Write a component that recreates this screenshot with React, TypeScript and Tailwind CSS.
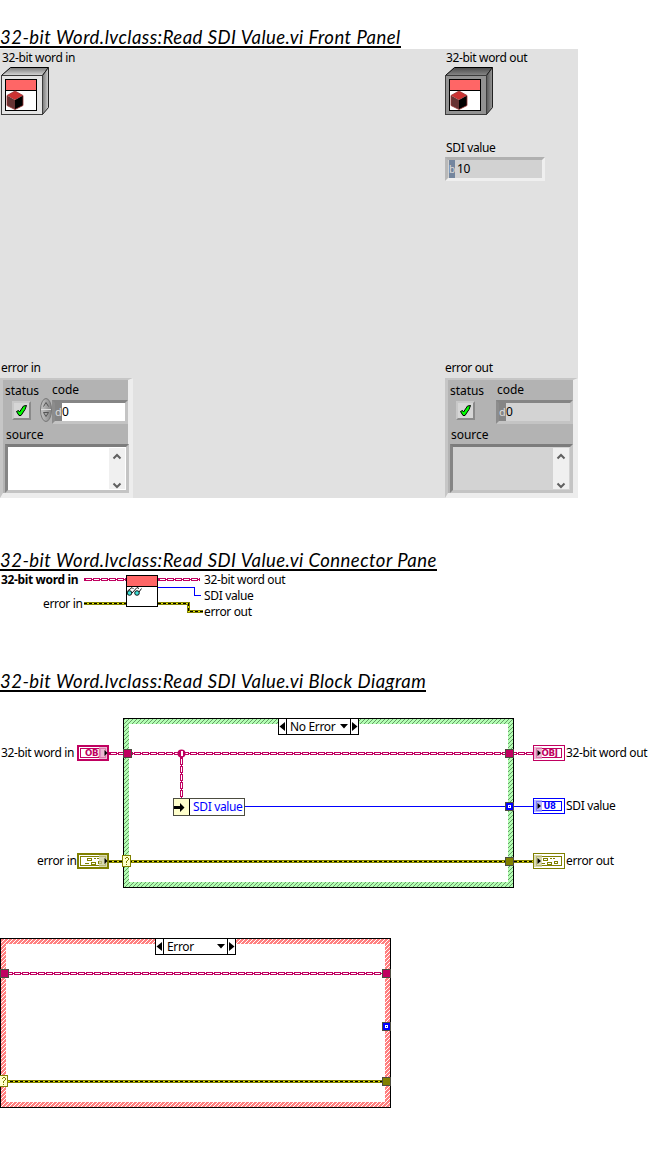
import type { ReactNode } from "react";

const PINK = "#c00060";
const OLIVE = "#808000";

function Heading({ children, className = "" }: { children: ReactNode; className?: string }) {
  return (
    <h2
      className={`h-[22px] w-max overflow-hidden whitespace-nowrap border-b-2 border-black font-['Lato',sans-serif] text-[18.5px] italic leading-[23px] tracking-[0.47px] ${className}`}
    >
      {children}
    </h2>
  );
}

function ObjectBox({ dark = false }: { dark?: boolean }) {
  const id = dark ? "box-out" : "box-in";
  return (
    <svg width="48" height="48" viewBox="0 0 48 48" className="block">
      <defs>
        <linearGradient id={id} x1="0" y1="0" x2="0" y2="1">
          <stop offset="0" stopColor={dark ? "#4a4a4a" : "#787878"} />
          <stop offset="1" stopColor={dark ? "#888888" : "#d8d8d8"} />
        </linearGradient>
        <linearGradient id={`${id}-side`} x1="0" y1="0" x2="1" y2="0">
          <stop offset="0" stopColor={dark ? "#555555" : "#777777"} />
          <stop offset="1" stopColor={dark ? "#999999" : "#d0d0d0"} />
        </linearGradient>
      </defs>
      <path d="M.5 8.5 9.5.5h38l-6 8z" fill={`url(#${id})`} stroke="#000" />
      <path d="M41.5 8.5l6-8v40l-6 7z" fill={`url(#${id}-side)`} stroke="#222" />
      <rect x=".5" y="8.5" width="41" height="39" fill={dark ? "#929292" : "#e4e4e4"} stroke="#3c3c3c" />
      <rect x="4.5" y="12.5" width="31" height="31" fill="#fff" stroke="#000" />
      <rect x="5" y="13" width="30" height="10" fill="#ff6666" />
      <path d="M5 23.5h30" stroke="#000" />
      <path d="M6 28.5l8-4.5 8 4.5-8 4.5z" fill="#cc3333" />
      <path d="M6 28.5l8 4.5v9.500l-8-4z" fill="#663333" />
      <path d="M22 28.5l-8 4.500v9.500l8-4z" fill="#000" />
      <path d="M6 28.5l8-4.500 8 4.500v10l-8 4-8-4z" fill="none" stroke="#993333" strokeWidth=".8" />
    </svg>
  );
}

function StatusButton() {
  return (
    <div className="h-[19px] w-[19px] border-2 border-b-[#8a8a8a] border-l-[#c8c8c8] border-r-[#8a8a8a] border-t-[#c8c8c8] bg-[#d6d6d6]">
      <svg width="15" height="15" viewBox="0 0 15 15" className="block">
        <path d="M2.500 8.500l2-1 1 1.500 4-6 3-.500-1.500 4-4 6H5z" fill="#00ff00" stroke="#000" />
      </svg>
    </div>
  );
}

function Spinner() {
  return (
    <svg width="12" height="24" viewBox="0 0 12 24" className="block">
      <defs>
        <linearGradient id="spin" x1="0" x2="1">
          <stop offset="0" stopColor="#c8c8c8" />
          <stop offset="1" stopColor="#858585" />
        </linearGradient>
      </defs>
      <ellipse cx="6" cy="12" rx="5.500" ry="11.500" fill="url(#spin)" stroke="#777" />
      <path d="M1 11.500h10" stroke="#ddd" />
      <path d="M3.500 8.500L6 4.500l2.500 4M3.500 14.500h5L6 18.500z" fill="none" stroke="#555" />
    </svg>
  );
}

function ErrorCluster({ output = false }: { output?: boolean }) {
  const fill = output ? "bg-[#d3d3d3]" : "bg-white";
  return (
    <div className="h-[120px] w-[133px] border-b-[5px] border-l-[3px] border-r-[5px] border-t-2 border-b-[#ededed] border-l-[#c6c6c6] border-r-[#ededed] border-t-[#c6c6c6] bg-[#b3b3b3] pl-0.5 tracking-[-0.05px]">
      <div className="flex h-[21px] items-start leading-[16px]">
        <span className={output ? "w-[47px] pt-[3px]" : "w-[47px] pt-[3px]"}>status</span>
        <span className="pt-0.5">code</span>
      </div>
      <div className="flex h-[25px] items-start">
        <div className={output ? "ml-1.5" : "ml-[7px]"}>
          <StatusButton />
        </div>
        <div className="ml-[9px] mt-[-3px] w-3">{!output && <Spinner />}</div>
        <div
          className={`mt-[-1px] flex h-[24px] border-[3px] border-b-[#c4c4c4] border-l-[#8c8c8c] border-r-[#c4c4c4] border-t-[#858585] leading-[17px] ${fill} ${output ? "w-[77px]" : "w-[76px]"}`}
        >
          <span className="w-[7px] overflow-hidden bg-[#858585] text-[11px] text-[#dddddd]">d</span>
          <span>0</span>
        </div>
      </div>
      <div className="h-[18px] pl-px leading-[18px]">source</div>
      <div
        className={`flex h-[49px] justify-end border-[3px] border-b-[#c4c4c4] border-l-[#858585] border-r-[#c4c4c4] border-t-[#7c7c7c] pr-px pt-px ${output ? "w-[123px]" : "w-[124px]"} ${fill}`}
      >
        <svg width="16" height="41" viewBox="0 0 16 41" className="block bg-[#f0f0f0]">
          <path d="M4.500 10.500L8 7l3.500 3.500M4.500 35.500L8 39l3.500-3.500" fill="none" stroke="#606060" strokeWidth="2" />
        </svg>
      </div>
    </div>
  );
}

function FrontPanel() {
  return (
    <div className="mt-px flex h-[449px] w-[578px] justify-between bg-[#e1e1e1]">
      <div className="flex flex-col justify-between">
        <div className="pl-px">
          <div className="h-[18px] pl-px leading-[18px]">32-bit word in</div>
          <ObjectBox />
        </div>
        <div>
          <div className="h-[18px] pl-px leading-[16px]">error in</div>
          <ErrorCluster />
        </div>
      </div>
      <div className="flex w-[133px] flex-col justify-between">
        <div>
          <div className="h-[18px] pl-px leading-[18px]">32-bit word out</div>
          <ObjectBox dark />
          <div className="mt-[23px] h-[19px] pl-px leading-[20px]">SDI value</div>
          <div className="flex h-[24px] w-[100px] border-[3px] border-b-[#efefef] border-l-[#b8b8b8] border-r-[#efefef] border-t-[#b0b0b0] bg-[#d2d2d2] leading-[18px]">
            <span className="ml-px w-1.5 overflow-hidden bg-[#74869e] text-[10px] text-[#dddddd]">b</span>
            <span className="pl-0.5">10</span>
          </div>
        </div>
        <div>
          <div className="h-[18px] leading-[16px]">error out</div>
          <ErrorCluster output />
        </div>
      </div>
    </div>
  );
}

type Run = { x: number; y: number; length: number };

function ClassWire({ x, y, length }: Run) {
  return (
    <g fill="none">
      <path d={`M${x} ${y + 1.5}h${length}`} stroke={PINK} strokeWidth="3" />
      <path d={`M${x + 2} ${y + 1.5}h${length - 3}`} stroke="#fff" strokeDasharray="5 3" />
      <path d={`M${x + 8} ${y + 0.5}h${length - 8}`} stroke="#fff" strokeDasharray="1 7" />
      <path d={`M${x + 8} ${y + 2.5}h${length - 8}`} stroke="#fff" strokeDasharray="1 7" />
    </g>
  );
}

function ErrorWire({ d }: { d: string }) {
  return (
    <g fill="none">
      <path d={d} stroke={OLIVE} strokeWidth="3" />
      <path d={d} stroke="#e6e600" />
      <path d={d} stroke="#000" strokeDasharray="3 2" />
    </g>
  );
}

function ConnectorPane() {
  return (
    <div className="relative h-[50px] w-full">
      <svg width="650" height="50" viewBox="0 571 650 50" shapeRendering="crispEdges" className="block">
        <ClassWire x={84} y={578} length={42} />
        <ClassWire x={158} y={578} length={42} />
        <path d="M158 587.500h36.500v8H201" fill="none" stroke="#0000ff" />
        <ErrorWire d="M84 603.500h42" />
        <ErrorWire d="M158 603.500h30.500v8H203" />
        <rect x="126.500" y="575.500" width="31" height="31" fill="#fff" stroke="#000" />
        <rect x="127" y="576" width="30" height="10" fill="#ff6666" />
        <path d="M127 586.500h30" stroke="#000" />
        <g shapeRendering="auto" fill="#40e0d8" stroke="#000" strokeWidth=".9">
          <circle cx="129.500" cy="593" r="2.300" />
          <circle cx="137" cy="593" r="2.300" />
          <path d="M127.500 591l4.500-3.500 1.500 1.500M132 593l5-5.500 2 1M139 592l2.500-3.500" fill="none" />
        </g>
      </svg>
      <span className="absolute left-px top-0 font-bold leading-[18px]">32-bit word in</span>
      <span className="absolute left-[43px] top-6 leading-[18px]">error in</span>
      <span className="absolute left-[204px] top-0 leading-[18px]">32-bit word out</span>
      <span className="absolute left-[204px] top-4 leading-[18px]">SDI value</span>
      <span className="absolute left-[204px] top-8 leading-[18px]">error out</span>
    </div>
  );
}

function CaseFrame({ x, y, pattern }: { x: number; y: number; pattern: string }) {
  return (
    <g>
      <rect x={x + 0.5} y={y + 0.5} width="390" height="169" fill={`url(#${pattern})`} stroke="#000" />
      <rect x={x + 6} y={y + 6} width="379" height="158" fill="#fff" />
      <g transform={`translate(${x + 155} ${y})`}>
        <rect x=".5" y=".5" width="80" height="16" fill="#fff" stroke="#000" />
        <path d="M8.500 0v17M72.500 0v17" stroke="#000" />
        <g shapeRendering="auto">
          <path d="M1.500 8.500l5.500-4.500v9zM79.500 8.500L74 4v9zM62 6h8l-4 4.500z" fill="#000" />
        </g>
      </g>
    </g>
  );
}

function Tunnel({ x, y, color, hollow = false }: { x: number; y: number; color: string; hollow?: boolean }) {
  return (
    <g>
      <rect x={x + 0.5} y={y + 0.5} width="8" height="8" fill={color} stroke="#4c4c40" />
      {hollow && <rect x={x + 3.5} y={y + 3.5} width="2" height="2" fill={color} stroke="#fff" />}
    </g>
  );
}

function SelectorTerminal({ x, y }: { x: number; y: number }) {
  return (
    <g>
      <rect x={x - 0.5} y={y + 0.5} width="8" height="11" fill="#ffffcc" stroke={OLIVE} />
      <path
        d="M2 3h1v1H2zM3 2h2v1H3zM5 3h1v2H5zM4 5h1v1H4zM3 6h1v2H3zM3 9h1v1H3z"
        transform={`translate(${x} ${y})`}
        fill={OLIVE}
      />
    </g>
  );
}

type TerminalProps = { x: number; y: number; color: string; tint: string; label?: string; control?: boolean };

function Terminal({ x, y, color, tint, label, control = false }: TerminalProps) {
  const short = label?.length === 2;
  return (
    <g transform={`translate(${x} ${y})`}>
      <rect x=".5" y=".5" width="31" height="15" fill="#fff" stroke={color} />
      {control && <rect x="1.500" y="1.500" width="29" height="13" fill="#fff" stroke={color} />}
      <rect x="3.500" y="3.500" width="25" height="9" fill="#fff" stroke={color} />
      {label ? (
        <text
          x={control ? 8 : short ? 10.5 : 8.5}
          y="11"
          fill={color}
          fontFamily="DejaVu Sans, sans-serif"
          fontWeight="bold"
          fontSize="8"
          textLength={short ? 12 : 16}
          lengthAdjust="spacingAndGlyphs"
        >
          {label}
        </text>
      ) : (
        <path d="M10 5.500h4v2h-4zM8 10.500h4M17 5h2M14 9h4v2h-4zM20 5.500h2M21 8.500h3v2h-3z" fill="none" stroke={color} />
      )}
      <rect x={control ? 22 : 1} y="2" width="8" height="12" fill={tint} opacity=".75" />
      <path d={control ? "M27.500 5v6l3-3z" : "M4.500 5v6l3.500-3z"} fill="#000" shapeRendering="auto" />
    </g>
  );
}

function BlockDiagram() {
  return (
    <div className="relative h-[424px] w-full">
      <svg width="650" height="424" viewBox="0 692 650 424" shapeRendering="crispEdges" className="block">
        <defs>
          <pattern id="ok-hatch" width="4" height="4" patternUnits="userSpaceOnUse">
            <rect width="4" height="4" fill="#b3ffb3" />
            <path d="M3 0h1v1H3zM2 1h1v1H2zM1 2h1v1H1zM0 3h1v1H0z" fill="#669966" />
          </pattern>
          <pattern id="error-hatch" width="4" height="4" patternUnits="userSpaceOnUse">
            <rect width="4" height="4" fill="#ff8080" />
            <path d="M3 0h1v1H3zM2 1h1v1H2zM1 2h1v1H1zM0 3h1v1H0z" fill="#ffffff" />
          </pattern>
        </defs>

        <CaseFrame x={123} y={718} pattern="ok-hatch" />
        <ClassWire x={109} y={752} length={424} />
        <g transform="translate(183 757) rotate(90)">
          <ClassWire x={0} y={0} length={41} />
        </g>
        <g shapeRendering="auto">
          <circle cx="181.500" cy="753.500" r="4" fill={PINK} />
          <rect x="181" y="751" width="2" height="5" fill="#fff" />
        </g>
        <path d="M245 806.500h288" stroke="#0000ff" />
        <ErrorWire d="M109 861.500h424" />
        <Tunnel x={123} y={749} color={PINK} />
        <Tunnel x={505} y={749} color={PINK} />
        <Tunnel x={505} y={802} color="#0000ff" hollow />
        <Tunnel x={505} y={857} color={OLIVE} />
        <SelectorTerminal x={123} y={855} />

        <rect x="173.500" y="798.500" width="71" height="17" fill="#fff" stroke="#4c4c40" />
        <rect x="174" y="799" width="15" height="16" fill="#ffffcc" />
        <path d="M189.500 799v16" stroke="#000" />
        <path d="M174 806h6v-3l4.500 4.500-4.500 4.500v-3h-6z" fill="#000" shapeRendering="auto" />

        <Terminal x={77} y={745} color={PINK} tint="#e6a0c4" label="OBJ" control />
        <Terminal x={77} y={853} color={OLIVE} tint="#cccc99" control />
        <Terminal x={533} y={745} color={PINK} tint="#e6a0c4" label="OBJ" />
        <Terminal x={533} y={798} color="#0000ff" tint="#a0a0ff" label="U8" />
        <Terminal x={533} y={853} color={OLIVE} tint="#cccc99" />

        <CaseFrame x={0} y={938} pattern="error-hatch" />
        <ClassWire x={5} y={972} length={380} />
        <ErrorWire d="M5 1081.500h380" />
        <Tunnel x={0} y={969} color={PINK} />
        <Tunnel x={382} y={969} color={PINK} />
        <Tunnel x={382} y={1022} color="#0000ff" hollow />
        <Tunnel x={382} y={1077} color={OLIVE} />
        <SelectorTerminal x={0} y={1075} />
      </svg>
      <span className="absolute left-px top-[52px] leading-[18px]">32-bit word in</span>
      <span className="absolute left-[37px] top-[160px] leading-[18px]">error in</span>
      <span className="absolute left-[290px] top-[26px] leading-[18px]">No Error</span>
      <span className="absolute left-[193px] top-[106px] leading-[18px] text-[#0000ff]">SDI value</span>
      <span className="absolute left-[566px] top-[52px] leading-[18px]">32-bit word out</span>
      <span className="absolute left-[566px] top-[105px] leading-[18px]">SDI value</span>
      <span className="absolute left-[566px] top-[160px] leading-[18px]">error out</span>
      <span className="absolute left-[167px] top-[246px] leading-[18px]">Error</span>
    </div>
  );
}

export default function App() {
  return (
    <main className="h-[1158px] w-[650px] overflow-hidden whitespace-nowrap bg-white pt-[26px] font-['Noto_Sans',sans-serif] text-[12px] tracking-[-0.35px] text-black">
      <Heading>32-bit Word.lvclass:Read SDI Value.vi Front Panel</Heading>
      <FrontPanel />
      <Heading className="mt-[51px]">32-bit Word.lvclass:Read SDI Value.vi Connector Pane</Heading>
      <ConnectorPane />
      <Heading className="mt-[49px]">32-bit Word.lvclass:Read SDI Value.vi Block Diagram</Heading>
      <BlockDiagram />
    </main>
  );
}
